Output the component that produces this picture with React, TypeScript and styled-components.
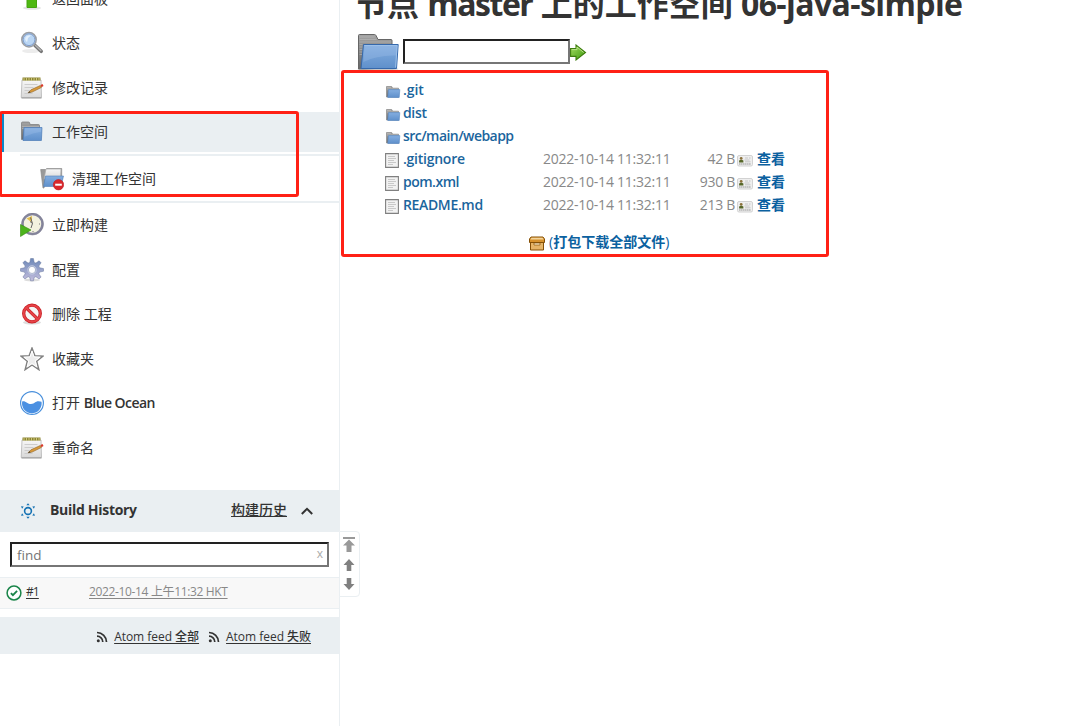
import React from "react";
import styled, { createGlobalStyle } from "styled-components";

const Global = createGlobalStyle`
  * { box-sizing: border-box; }
  html, body { margin: 0; padding: 0; background: #fff; overflow: hidden; }
  body { font: 14px/20px "Open Sans", "Noto Sans CJK SC", sans-serif; color: #333; }
  a { color: inherit; }
  svg { display: block; flex: none; }
`;

const Page = styled.div`
  position: relative;
  display: flex;
  width: 1092px;
  height: 726px;
  overflow: hidden;
`;
const Sidebar = styled.aside`
  width: 340px;
  height: 726px;
  flex: none;
  border-right: 1px solid #eaeff2;
`;
const Tasks = styled.nav`
  display: flex;
  flex-direction: column;
  gap: 4.5px;
  margin-top: -21.5px;
  height: 511.5px;
`;
const Task = styled.a<{ $active?: boolean }>`
  display: flex;
  align-items: center;
  gap: 8px;
  height: 40px;
  padding-left: 20px;
  flex: none;
  background: ${(p) => (p.$active ? "#eaeff2" : "transparent")};
  box-shadow: ${(p) => (p.$active ? "inset 4px 0 #0b87c9" : "none")};
`;
const Latin = styled.span<{ $ls?: number; $weight?: number }>`
  letter-spacing: ${(p) => p.$ls ?? 0}px;
  font-weight: ${(p) => p.$weight ?? "inherit"};
`;
const SubTasks = styled.div`
  height: 49px;
  flex: none;
  margin: -2.5px 0 -2.5px 20px;
  border-top: 2px solid #eaeff2;
  border-bottom: 2px solid #eaeff2;
  display: flex;
  align-items: center;
`;
const PaneHeader = styled.div`
  display: flex;
  align-items: center;
  height: 42px;
  padding: 0 25px 0 20px;
  background: #eaeff2;
  font-weight: 700;
`;
const PaneTitle = styled.span`
  flex: 1;
  padding: 0 0 2px 14px;
  letter-spacing: -0.3px;
`;
const TrendLink = styled.a`
  font-weight: 500;
  text-decoration: underline;
  margin-right: 13px;
  padding-bottom: 2px;
`;
const SearchArea = styled.div`
  height: 45px;
  padding: 10px 10px 0;
`;
const Field = styled.div<{ $w: number }>`
  display: flex;
  align-items: center;
  justify-content: space-between;
  width: ${(p) => p.$w}px;
  height: 25px;
  padding: 0 4px 0 5px;
  border: 2px solid;
  border-color: #222 #767676 #767676 #222;
  background: #fff;
  color: #757575;
  font-size: 13.5px;
`;
const Clear = styled.span`
  color: #aaa;
  font-size: 12px;
  padding-bottom: 2px;
`;
const BuildRow = styled.div`
  display: flex;
  align-items: center;
  height: 32px;
  padding-left: 6px;
  border-top: 1px solid #eaeff2;
  border-bottom: 1px solid #eaeff2;
  background: #f8f8f8;
  font-size: 12px;
  letter-spacing: -0.35px;
`;
const BuildNo = styled.a`
  margin: 0 51px 2px 4px;
  width: 12px;
  color: #333;
  letter-spacing: -0.9px;
  text-decoration: underline;
  text-underline-offset: 2px;
`;
const BuildTime = styled.a`
  margin-bottom: 2px;
  color: #888;
  text-decoration: underline;
  text-underline-offset: 2px;
`;
const Feeds = styled.div`
  display: flex;
  align-items: center;
  justify-content: flex-end;
  height: 37px;
  margin-top: 8px;
  padding: 3px 28px 0 0;
  background: #eaeff2;
  font-size: 12px;
  letter-spacing: -0.03px;
`;
const FeedLink = styled.a`
  margin: 0 0 0 6px;
  text-decoration: underline;
  text-underline-offset: 2px;
  font-weight: 500;
  & + svg { margin-left: 9px; }
`;
const Main = styled.main`
  flex: 1;
  min-width: 0;
`;
const Title = styled.h1`
  margin: -18px 0 0 15px;
  height: 49px;
  font-size: 32px;
  line-height: 44px;
  font-weight: 700;
  white-space: nowrap;
`;
const PathBar = styled.div`
  display: flex;
  align-items: center;
  height: 38px;
  padding-left: 17px;
  margin-top: 2px;
  & > svg:last-child { margin-top: 1px; }
`;
const PathInput = styled.div`
  padding: 0 0 2px 4px;
`;
const Files = styled.div`
  display: flex;
  flex-direction: column;
  margin: 8px 0 0 45px;
  width: 400px;
`;
const FileRow = styled.div`
  display: grid;
  grid-template-columns: 18px 140px 127px 65px 22px 28px;
  align-items: center;
  height: 23px;
  color: #888;
  white-space: nowrap;
  & > a, & > span { margin-top: -1px; }
`;
const FileLink = styled.a`
  color: #1b659d;
  font-weight: 600;
`;
const ViewLink = styled.a`
  color: #0b61a0;
  font-weight: 700;
`;
const Size = styled.span`
  text-align: right;
  letter-spacing: -0.3px;
`;
const IconSlot = styled.div<{ $left?: number; $top?: number }>`
  padding: ${(p) => p.$top ?? 2}px 0 0 ${(p) => p.$left ?? 0}px;
`;
const ZipRow = styled.div`
  display: flex;
  align-items: center;
  gap: 4px;
  height: 24px;
  margin: 14px 0 0 144px;
  color: #0b61a0;
  & > span { margin-top: -3px; }
`;
const Scroller = styled.div`
  position: absolute;
  left: 339px;
  top: 531px;
  width: 21px;
  height: 66px;
  display: flex;
  flex-direction: column;
  align-items: flex-start;
  gap: 7px;
  padding: 5px 0 0 3px;
  border: 1px solid #eaeff2;
  border-radius: 0 4px 4px 0;
  background: #fff;
`;
const Marker = styled.div<{ $x: number; $y: number; $w: number; $h: number }>`
  position: absolute;
  left: ${(p) => p.$x}px;
  top: ${(p) => p.$y}px;
  width: ${(p) => p.$w}px;
  height: ${(p) => p.$h}px;
  border: 3px solid #ff2015;
  border-radius: 3px;
  pointer-events: none;
`;
const HiddenSvg = styled.svg`
  position: absolute;
`;

const Defs = () => (
  <HiddenSvg width="0" height="0">
    <defs>
      <linearGradient id="blue" x1="0" y1="0" x2="0" y2="1">
        <stop offset="0" stopColor="#84aee0" /><stop offset="1" stopColor="#5f90cb" />
      </linearGradient>
      <linearGradient id="gray" x1="0" y1="0" x2="0" y2="1">
        <stop offset="0" stopColor="#a5a5a5" /><stop offset="1" stopColor="#666" />
      </linearGradient>
      <linearGradient id="paper" x1="0" y1="0" x2="0" y2="1">
        <stop offset="0" stopColor="#f7f7f7" /><stop offset="1" stopColor="#d8d8d8" />
      </linearGradient>
      <linearGradient id="gear" x1="0" y1="0" x2="0" y2="1">
        <stop offset="0" stopColor="#6c88b8" /><stop offset="1" stopColor="#c3bddd" />
      </linearGradient>
      <linearGradient id="green" x1="0" y1="0" x2="1" y2="1">
        <stop offset="0" stopColor="#a5dc60" /><stop offset="1" stopColor="#3b9a0c" />
      </linearGradient>
    </defs>
  </HiddenSvg>
);

const UpIcon = () => (
  <svg width="24" height="24" viewBox="0 0 24 24">
    <ellipse cx="12" cy="21" rx="9" ry="1.800" fill="#e4e4e4" />
    <path d="M12 2l9 9h-4.500v9.500h-9.500V11H3z" fill="#4fb812" stroke="#45a310" />
  </svg>
);
const SearchIcon = () => (
  <svg width="24" height="24" viewBox="0 0 24 24">
    <ellipse cx="11" cy="20" rx="9" ry="2" fill="#ececec" />
    <path d="M15 14.500l6.200 5.800" stroke="#777" strokeWidth="3.600" strokeLinecap="round" />
    <path d="M15.500 14.500l5.300 5" stroke="#b4b4b4" strokeWidth="1.400" strokeLinecap="round" />
    <circle cx="9" cy="8.700" r="7.200" fill="#bad6f4" stroke="#9b9ea3" strokeWidth="1.500" />
    <circle cx="9" cy="8.700" r="5.900" fill="none" stroke="#7f9dcb" strokeWidth="1" />
    <path d="M5 8a4.500 4.500 0 0 1 6-3.500Q8 6 7.500 9.500T5 8" fill="#e4f0fc" />
  </svg>
);
const NotepadIcon = () => (
  <svg width="24" height="24" viewBox="0 0 24 24">
    <path d="M2 4h19l.5 17.500H1.200z" fill="url(#paper)" stroke="#b4b4b4" strokeWidth=".8" />
    <path d="M1.500 22h20" stroke="#999" />
    <path d="M2.500 1.500h18v3H2.500z" fill="#8c8433" />
    <path d="M4 2v3M6.500 2v3M9 2v3M11.500 2v3M14 2v3M16.500 2v3M19 2v3" stroke="#d5cf85" strokeWidth=".9" />
    <path d="M4.500 8.500h13M4.500 11.500h9M4.500 14.500h5M4.500 17.500h8" stroke="#c8c8c8" strokeWidth=".9" />
    <path d="M8 16.800l3-3 9.300-4.300 1 2-9.300 4.600z" fill="#d99a3a" stroke="#8f6220" strokeWidth=".6" />
    <path d="M8 16.800l1.700-1.600.8 1.400z" fill="#333" />
    <path d="M20.500 9l2-.9 1 2-2 1.100z" fill="#d9382a" />
  </svg>
);
const FolderIcon = () => (
  <svg width="24" height="24" viewBox="0 0 24 24">
    <path d="M1.500 19.500V3q0-1 1-1h6q1 0 1.200 1l.4 1.500h8.400q1 0 1 1V19z" fill="url(#gray)" stroke="#777" strokeWidth=".7" />
    <path d="M2 6.500h17M2 8.500h4" stroke="#c0c0c0" strokeWidth=".6" />
    <path d="M4 7.500h18L21.400 20.500H3z" fill="url(#blue)" stroke="#4a7ab6" strokeWidth=".7" />
    <path d="M4.800 8.300h16.400l-.2 3.500q-8 1-16.500 5z" fill="#a4c4ea" opacity=".3" />
  </svg>
);
const SmallFolderIcon = () => (
  <svg width="15" height="13" viewBox="0 0 15 13">
    <path d="M.5 12V1.500h5.200l1 1.700h5.800v9z" fill="url(#gray)" stroke="#888" strokeWidth=".7" />
    <path d="M1 2.500h4M1 4h11" stroke="#c0c0c0" strokeWidth=".6" />
    <path d="M2.500 4.600h11.300L13.200 12.400H1.800z" fill="url(#blue)" stroke="#5f8fc8" strokeWidth=".7" />
  </svg>
);
const BigFolderIcon = () => (
  <svg width="42" height="38" viewBox="0 0 42 38">
    <ellipse cx="21" cy="36" rx="20.500" ry="1.500" fill="#c8c8c8" />
    <path d="M1.500 36V2.500q0-1 1-1h15q1 0 1.500 1l2 4h13q1 0 1 1V35z" fill="url(#gray)" stroke="#666" />
    <path d="M2.500 4h15M2.500 6.500h17M2.500 9h32M2.500 11.500h3M2.500 14h3M2.500 16.500h3M2.500 19h3M2.500 21.500h3" stroke="#bbb" strokeWidth=".6" />
    <path d="M6.500 11.500h34.700L39.500 35.500H4z" fill="url(#blue)" stroke="#3568ab" />
    <path d="M7.500 12.500h32.500l-.7 10Q20 22 6.300 29z" fill="#a4c5ec" opacity=".3" />
    <path d="M7.400 12.500h32.700L38.600 34.500" fill="none" stroke="#9cc0e9" />
  </svg>
);
const WipeIcon = () => (
  <svg width="24" height="24" viewBox="0 0 24 24">
    <path d="M.7 2.500h5l1-1h15V10H6l-2 11H3z" fill="#999" stroke="#888" strokeWidth=".7" />
    <path d="M6 2h15l-.5 10H4z" fill="url(#paper)" stroke="#aaa" strokeWidth=".7" />
    <path d="M5.500 9h18L21 19.500H3.500z" fill="url(#blue)" stroke="#517fb8" strokeWidth=".6" />
    <circle cx="18.500" cy="17.700" r="5.200" fill="#d9282c" stroke="#bd1d22" strokeWidth=".6" />
    <path d="M15.200 17.700h6.600" stroke="#fff" strokeWidth="2" />
  </svg>
);
const ClockIcon = () => (
  <svg width="24" height="24" viewBox="0 0 24 24">
    <circle cx="12.500" cy="11" r="9.900" fill="#f3f2df" stroke="#85859c" strokeWidth="2.300" />
    <circle cx="12.500" cy="11" r="11" fill="none" stroke="#77778a" strokeWidth=".5" />
    <path d="M12 9.500L6.500 5.500 12 3z" fill="#e4bd4c" />
    <path d="M10.500 4.500l2 6-1.500 4.500M12.500 10.500l-2.500-2" stroke="#666" strokeWidth="1" fill="none" />
    <path d="M19.500 10.500v1M12.500 18.500h1" stroke="#777" />
    <path d="M.5 11.500L11 17 .5 23.500z" fill="#4cb31c" stroke="#328c0c" strokeWidth=".6" />
  </svg>
);
const GearIcon = () => (
  <svg width="24" height="24" viewBox="0 0 24 24">
    <ellipse cx="12" cy="22" rx="8" ry="1.500" fill="#ddd" />
    <g fill="url(#gear)" stroke="#66779c" strokeWidth=".5">
      <path fillRule="evenodd" d="M10.600.5h2.800l.8 3.900 1.700.7 3.200-2.300 2 2-2.300 3.200.7 1.700 4 .9v2.600l-4 .9-.7 1.700 2.300 3.200-2 2-3.200-2.300-1.700.7-.8 3.400h-2.800l-.8-3.400-1.700-.7-3.200 2.300-2-2 2.300-3.200-.7-1.700-4-.9v-2.600l4-.9.7-1.700-2.300-3.200 2-2 3.200 2.300 1.700-.7zM12 8.300a3.600 3.600 0 1 0 0 7.200 3.600 3.600 0 1 0 0-7.200z" />
    </g>
    <circle cx="12" cy="11.900" r="4.200" fill="none" stroke="#ccd3e6" strokeWidth=".8" />
  </svg>
);
const ForbidIcon = () => (
  <svg width="24" height="24" viewBox="0 0 24 24">
    <ellipse cx="12" cy="20.500" rx="9" ry="2" fill="#ddd" />
    <circle cx="12" cy="11.500" r="8.300" fill="#f5f5f5" stroke="#c61d22" strokeWidth="3.300" />
    <path d="M6.200 5.800l11.600 11.400" stroke="#c61d22" strokeWidth="3.200" />
    <circle cx="12" cy="11.500" r="8.300" fill="none" stroke="#e64247" strokeWidth="1.900" />
    <path d="M6.200 5.800l11.600 11.400" stroke="#e64247" strokeWidth="1.900" />
  </svg>
);
const StarIcon = () => (
  <svg width="24" height="24" viewBox="0 0 24 24">
    <path d="M12 1l2.900 7.700 8.300.4-6.500 5.200 2.200 8.400L12 18l-6.900 4.700 2.200-8.400L.8 9.100l8.300-.4z" fill="#ededed" stroke="#808080" strokeWidth="1.400" />
    <path d="M12 4l2 5.900 6 .3-4.800 3.700 1.600 6-4.800-3.300-4.800 3.300 1.600-6L4 10.200l6-.3z" fill="none" stroke="#fff" />
  </svg>
);
const OceanIcon = () => (
  <svg width="24" height="24" viewBox="0 0 24 24">
    <circle cx="12" cy="12" r="11.400" fill="#fff" stroke="#4a90dc" strokeWidth="1.200" />
    <path d="M2.300 10.200C6 9.600 7.500 13 11 13c4 0 4-2.700 7.500-2.700q1.800 0 3 .5A9.800 9.800 0 1 1 2.300 10.200z" fill="#4a90e2" />
  </svg>
);
const SunIcon = () => (
  <svg width="16" height="16" viewBox="0 0 16 16">
    <circle cx="8" cy="8" r="3.400" fill="none" stroke="#1572b3" strokeWidth="1.600" />
    <path d="M8 .2l1.700 2H6.300zM8 15.800l1.700-2H6.300zM1 3.200l2.700.3-1.600 2.300zM15 3.200l-2.700.3 1.600 2.300zM1 12.800l2.700-.3-1.600-2.300zM15 12.800l-2.700-.3 1.600-2.300z" fill="#1572b3" />
  </svg>
);
const ChevronIcon = () => (
  <svg width="14" height="14" viewBox="0 0 14 14">
    <path d="M1.800 10L7 4.800l5.200 5.200" fill="none" stroke="#333" strokeWidth="2" />
  </svg>
);
const OkIcon = () => (
  <svg width="16" height="16" viewBox="0 0 16 16">
    <circle cx="8" cy="8" r="6.900" fill="#fff" stroke="#1a8549" strokeWidth="1.500" />
    <path d="M4.900 8.200l2 2 4.200-4.300" fill="none" stroke="#1a8549" strokeWidth="1.800" />
  </svg>
);
const RssIcon = () => (
  <svg width="12" height="12" viewBox="0 0 12 12">
    <circle cx="2.300" cy="9.700" r="1.500" fill="#333" />
    <path d="M1 5.200a5.800 5.800 0 0 1 5.800 5.800M1 1.500A9.500 9.500 0 0 1 10.500 11" fill="none" stroke="#333" strokeWidth="1.700" />
  </svg>
);
const GoIcon = () => (
  <svg width="17" height="17" viewBox="0 0 17 17">
    <path d="M.6 4.600h5.400V1L15.500 8.500 6 16v-3.600H.6z" fill="url(#green)" stroke="#3d7d0d" strokeWidth="1.100" />
    <path d="M1.500 5.600h5.500V3l6.700 5.500" fill="none" stroke="#c9ec9d" strokeWidth=".8" />
  </svg>
);
const DocIcon = () => (
  <svg width="14" height="15" viewBox="0 0 14 15">
    <path d="M.6.600h12.800v13.800H.6z" fill="#f2f2f2" stroke="#808080" strokeWidth="1.100" />
    <path d="M3 3.500h7M3 5.500h8M3 7.500h6M3 9.500h8M3 11.500h5" stroke="#c4c4c4" strokeWidth=".9" />
  </svg>
);
const CardIcon = () => (
  <svg width="16" height="12" viewBox="0 0 16 12">
    <rect x=".5" y=".5" width="15" height="10.500" rx="1.500" fill="#eee" stroke="#d2d2d2" />
    <circle cx="4.200" cy="3.400" r="1.400" fill="#8a713b" />
    <path d="M2.100 7.400V5.500q2.200-1.700 4.300 0v1.900z" fill="#566729" />
    <path d="M8 3h3M12 3h1.500M7.500 5h5M8 6.800h5.500" stroke="#bbb" strokeWidth=".8" />
    <path d="M2 9h12" stroke="#999" strokeDasharray="1.500 .4" />
  </svg>
);
const ZipIcon = () => (
  <svg width="16" height="15" viewBox="0 0 16 15">
    <path d="M1.500 6h13v8h-13z" fill="#e6b568" stroke="#855006" />
    <path d="M2 1h12l1.500 2v3.500H.5V3z" fill="#d7922c" stroke="#855006" />
    <path d="M2.500 1.800h11l1.200 1.700H1.300z" fill="#f3d49b" />
    <path d="M5 7h6v2H5z" fill="#fff1cf" stroke="#855006" strokeWidth=".7" />
  </svg>
);
const Arrow = ({ d, h, color }: { d: string; h: number; color: string }) => (
  <svg width="12" height={h} viewBox={`0 0 12 ${h}`}><path d={d} fill={color} /></svg>
);

const folders: [string, number][] = [[".git", -0.1], ["dist", -0.35], ["src/main/webapp", -0.55]];
const files: [string, string, number][] = [
  [".gitignore", "42 B", -0.25],
  ["pom.xml", "930 B", -0.5],
  ["README.md", "213 B", -0.35],
];

export default function App() {
  return (
    <Page>
      <Global />
      <Defs />
      <Sidebar>
        <Tasks>
          <Task><UpIcon />返回面板</Task>
          <Task><SearchIcon />状态</Task>
          <Task><NotepadIcon />修改记录</Task>
          <Task $active><FolderIcon />工作空间</Task>
          <SubTasks><Task><WipeIcon />清理工作空间</Task></SubTasks>
          <Task><ClockIcon />立即构建</Task>
          <Task><GearIcon />配置</Task>
          <Task><ForbidIcon />删除 工程</Task>
          <Task><StarIcon />收藏夹</Task>
          <Task><OceanIcon /><span>打开 <Latin $weight={600} $ls={-0.55}>Blue Ocean</Latin></span></Task>
          <Task><NotepadIcon />重命名</Task>
        </Tasks>
        <PaneHeader>
          <SunIcon />
          <PaneTitle>Build History</PaneTitle>
          <TrendLink>构建历史</TrendLink>
          <ChevronIcon />
        </PaneHeader>
        <SearchArea>
          <Field $w={319}><span>find</span><Clear>x</Clear></Field>
        </SearchArea>
        <BuildRow>
          <OkIcon />
          <BuildNo>#1</BuildNo>
          <BuildTime>2022-10-14 上午11:32 HKT</BuildTime>
        </BuildRow>
        <Feeds>
          <RssIcon /><FeedLink>Atom feed 全部</FeedLink>
          <RssIcon /><FeedLink>Atom feed 失败</FeedLink>
        </Feeds>
      </Sidebar>
      <Main>
        <Title>节点 <Latin $ls={-1.5}>master</Latin> 上的工作空间 <Latin $ls={-0.6}>06-java-simple</Latin></Title>
        <PathBar>
          <BigFolderIcon />
          <PathInput><Field $w={167} /></PathInput>
          <GoIcon />
        </PathBar>
        <Files>
          {folders.map(([name, ls]) => (
            <FileRow key={name}>
              <IconSlot $left={1} $top={1}><SmallFolderIcon /></IconSlot>
              <FileLink><Latin $ls={ls}>{name}</Latin></FileLink>
            </FileRow>
          ))}
          {files.map(([name, size, ls]) => (
            <FileRow key={name}>
              <IconSlot><DocIcon /></IconSlot>
              <FileLink><Latin $ls={ls}>{name}</Latin></FileLink>
              <Latin $ls={-0.24}>2022-10-14 11:32:11</Latin>
              <Size>{size}</Size>
              <IconSlot $left={2} $top={2}><CardIcon /></IconSlot>
              <ViewLink>查看</ViewLink>
            </FileRow>
          ))}
          <ZipRow><ZipIcon /><span>(<ViewLink>打包下载全部文件</ViewLink>)</span></ZipRow>
        </Files>
      </Main>
      <Scroller>
        <Arrow h={15} color="#999" d="M0 0h12v2H0zM6 2.500l6 6H8.500V15h-5V8.500H0z" />
        <Arrow h={12} color="#808080" d="M6 0l5.500 6H8.300v6H3.700V6H.5z" />
        <Arrow h={12} color="#808080" d="M6 12l5.500-6H8.300V0H3.700v6H.5z" />
      </Scroller>
      <Marker $x={-1} $y={111} $w={300} $h={86} />
      <Marker $x={341} $y={70} $w={488} $h={187} />
    </Page>
  );
}
